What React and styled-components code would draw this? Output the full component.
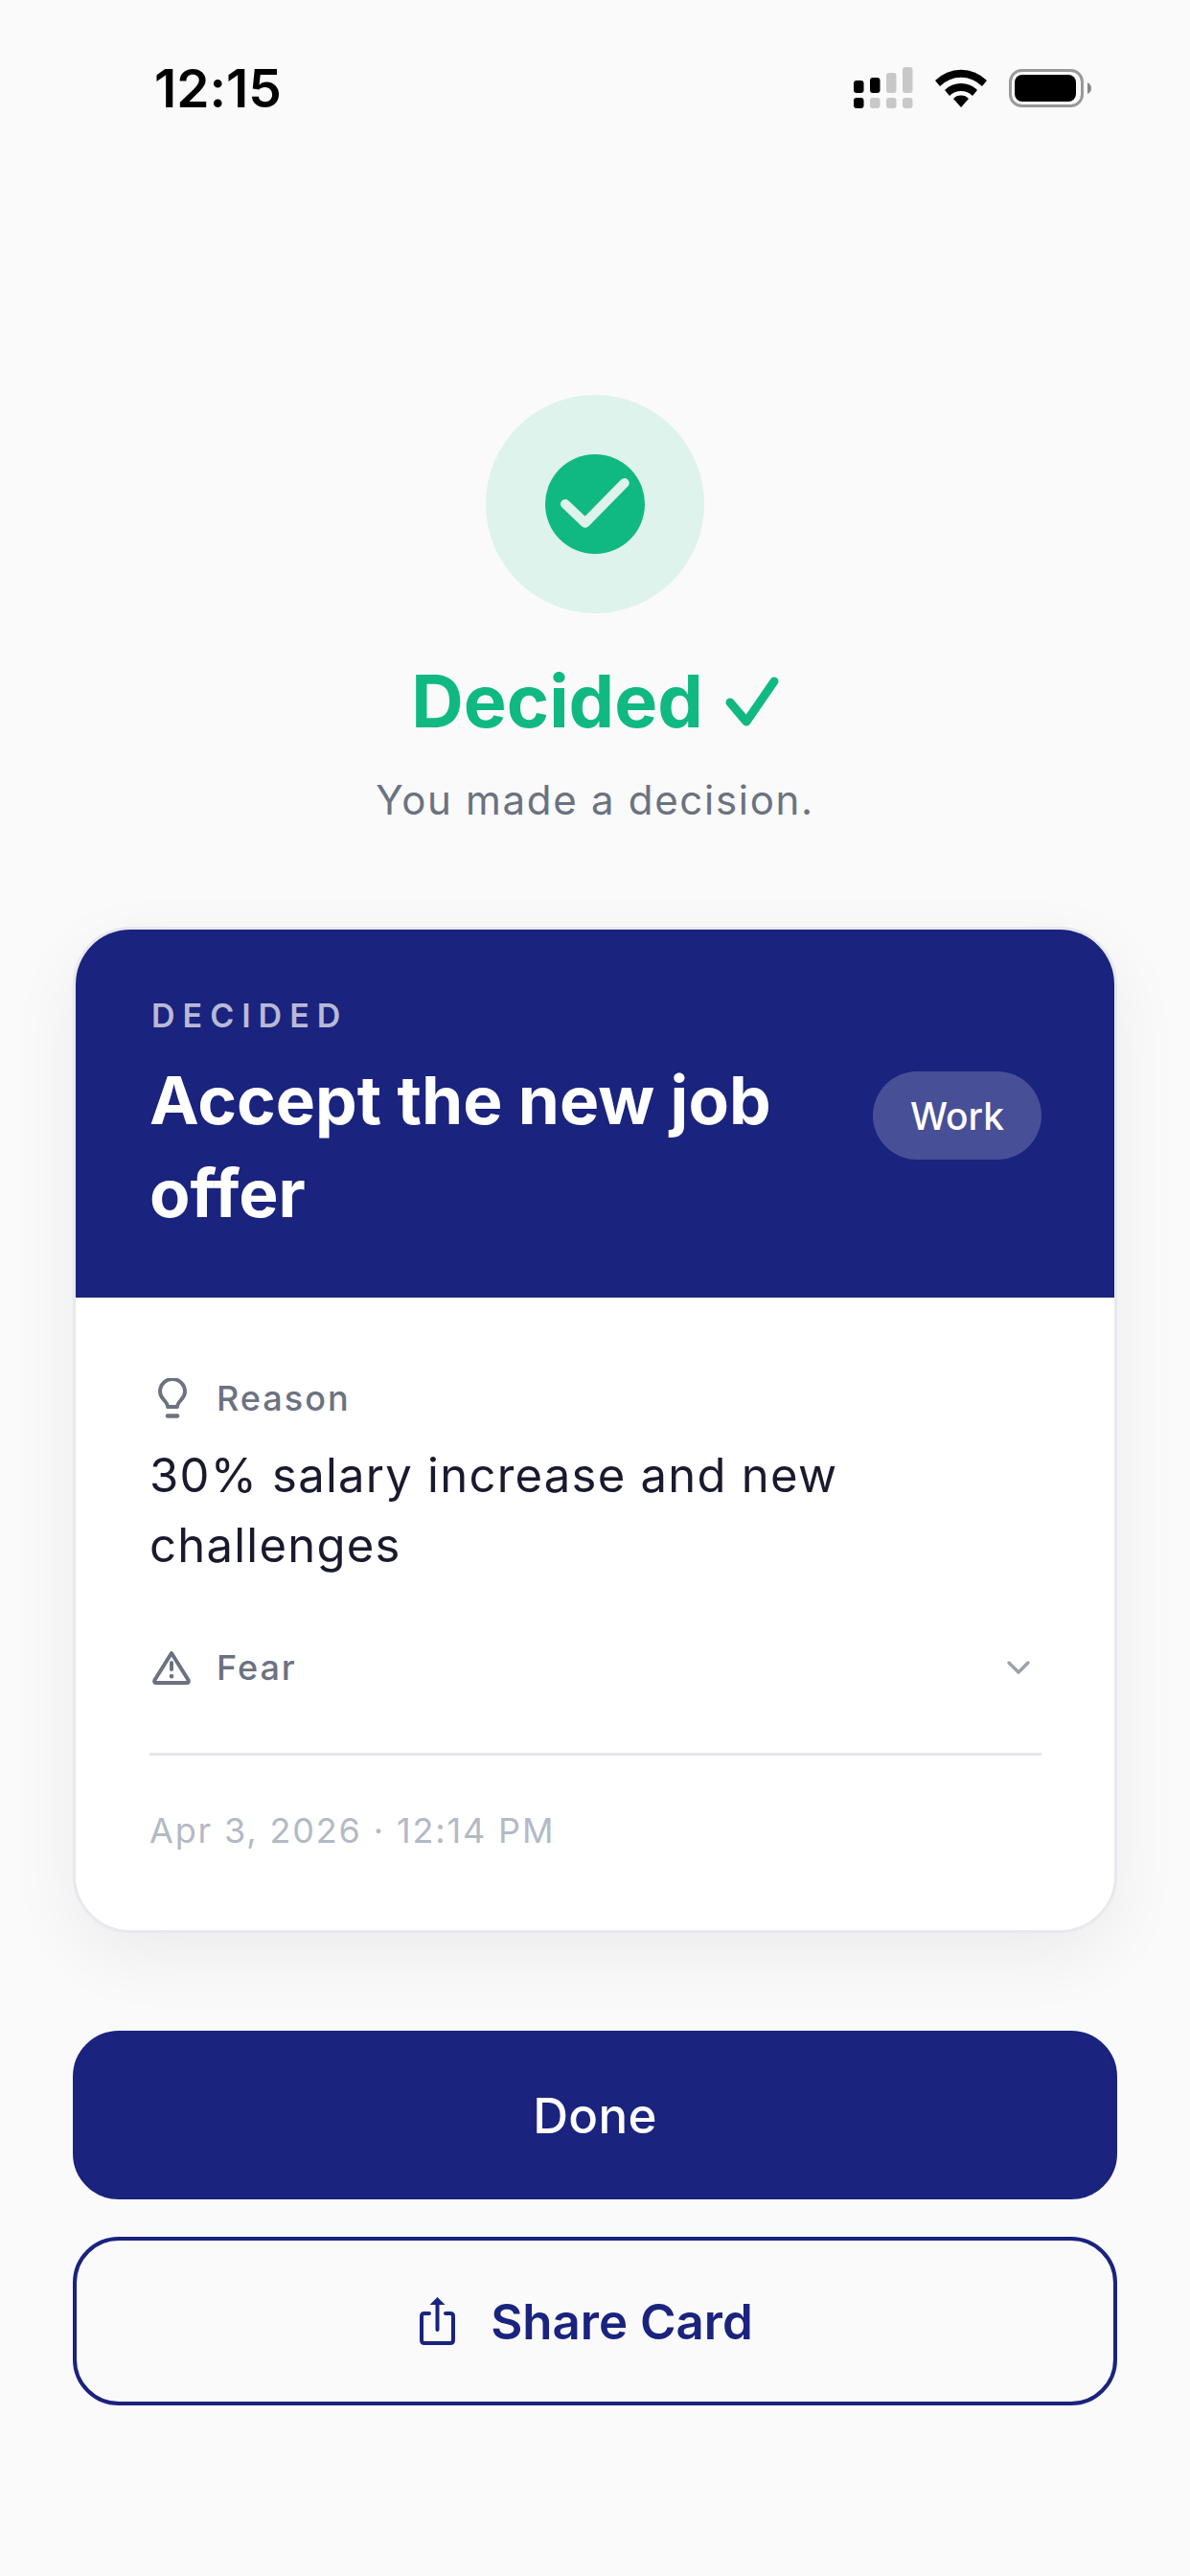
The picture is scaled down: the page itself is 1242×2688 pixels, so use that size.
import React from 'react'
import styled, { createGlobalStyle } from 'styled-components'

const GlobalStyle = createGlobalStyle`
    html, body {
        margin: 0;
        padding: 0;
        background: #fafafb;
    }
    * {
        box-sizing: border-box;
    }
`

const Page = styled.div`
    width: 1242px;
    height: 2688px;
    background: #fafafb;
    font-family: Inter, "Liberation Sans", sans-serif;
    font-variant-ligatures: none;
    display: flex;
    flex-direction: column;
`

const StatusBar = styled.div`
    height: 184px;
    padding: 0 103px 0 161px;
    display: flex;
    align-items: center;
    justify-content: space-between;
`

const Clock = styled.span`
    font-size: 55px;
    font-weight: 600;
    color: #000;
`

const StatusIcons = styled.div`
    display: flex;
    align-items: center;
    gap: 23px;
`

const Hero = styled.div`
    margin-top: 228px;
    display: flex;
    flex-direction: column;
    align-items: center;
`

const Halo = styled.div`
    width: 228px;
    height: 228px;
    border-radius: 50%;
    background: #def3eb;
    display: flex;
    align-items: center;
    justify-content: center;
`

const Badge = styled.div`
    width: 104px;
    height: 104px;
    border-radius: 50%;
    background: #10b981;
    display: flex;
`

const Heading = styled.h1`
    margin: 48px 0 0;
    display: flex;
    align-items: center;
    gap: 23px;
    font-size: 75.5px;
    line-height: 88px;
    font-weight: 700;
    color: #10b981;
`

const Subheading = styled.p`
    margin: 31px 0 0;
    font-size: 42px;
    line-height: 56px;
    letter-spacing: 1.7px;
    color: #6b7280;
`

const Content = styled.div`
    padding: 0 76px;
    display: flex;
    flex-direction: column;
`

const Card = styled.div`
    margin-top: 104px;
    border: 3px solid #e8e9ee;
    border-radius: 60px;
    background: #fff;
    overflow: hidden;
    box-shadow: 0 24px 72px rgba(0, 0, 0, 0.06);
`

const CardHeader = styled.div`
    height: 384px;
    padding: 70px 76px 0 77px;
    background: #1a237e;
    display: flex;
    align-items: flex-start;
    justify-content: space-between;
`

const Eyebrow = styled.div`
    margin-left: 2px;
    font-size: 34px;
    line-height: 40px;
    font-weight: 600;
    letter-spacing: 8px;
    color: rgba(255, 255, 255, 0.7);
`

const CardTitle = styled.h2`
    margin: 20px 0 0;
    width: 680px;
    font-size: 69.3px;
    line-height: 97px;
    font-weight: 700;
    color: #fff;
`

const Tag = styled.span`
    margin-top: 78px;
    width: 176px;
    height: 92px;
    border-radius: 46px;
    background: rgba(255, 255, 255, 0.2);
    display: flex;
    align-items: center;
    justify-content: center;
    font-size: 39px;
    font-weight: 500;
    color: #fff;
`

const CardBody = styled.div`
    padding: 81px 76px 80px 77px;
`

const FieldLabel = styled.div`
    display: flex;
    align-items: center;
    height: 48px;
    font-size: 36px;
    font-weight: 450;
    letter-spacing: 2px;
    color: #6b7280;
`

const LabelIcon = styled.span`
    width: 70px;
    display: flex;
    padding-left: ${props => props.$inset}px;
`

const Chevron = styled.svg`
    margin-left: auto;
    margin-right: 11px;
`

const FieldText = styled.p`
    margin: 20px 0 0;
    font-size: 49px;
    line-height: 73px;
    letter-spacing: 1.25px;
    color: #1a1a2e;
`

const FearRow = styled.div`
    margin-top: 67px;
    padding-bottom: 65px;
    border-bottom: 3px solid #e5e7eb;
`

const Timestamp = styled.div`
    margin-top: 54px;
    font-size: 36px;
    line-height: 48px;
    letter-spacing: 1.85px;
    color: #b4b9c6;
`

const Actions = styled.div`
    margin-top: 102px;
    display: flex;
    flex-direction: column;
    gap: 39px;
`

const ActionButton = styled.button`
    height: 176px;
    padding: 0 ${props => props.$outline ? 18 : 0}px 0 0;
    border-radius: 48px;
    border: 4px solid #1a237e;
    background: ${props => props.$outline ? 'transparent' : '#1a237e'};
    color: ${props => props.$outline ? '#1a237e' : '#fff'};
    font-family: inherit;
    font-size: 51px;
    font-weight: ${props => props.$outline ? 600 : 550};
    letter-spacing: ${props => props.$outline ? 0 : 0.3}px;
    display: flex;
    align-items: center;
    justify-content: center;
    gap: 37px;
`

const SignalIcon = () => {
    const bars = [
        { x: 0, y: 14, h: 13, on: true },
        { x: 17, y: 11, h: 16, on: true },
        { x: 34, y: 6, h: 21, on: false },
        { x: 51, y: 0, h: 27, on: false }
    ]
    return (
        <svg width="62" height="44" viewBox="0 0 62 44">
            {bars.map((b, i) => (
                <g key={i} fill={b.on ? '#000' : '#c8c8c8'}>
                    <rect x={b.x} y={b.y} width="10.5" height={b.h} rx="3" />
                    <rect x={b.x} y="32" width="10.5" height="11" rx="3" fill={i === 0 ? '#000' : '#c8c8c8'} />
                </g>
            ))}
        </svg>
    )
}

const WifiIcon = () => (
    <svg width="54" height="40" viewBox="0 0 54 40">
        <path d="M0 12 A38 38 0 0 1 54 12 L49 18 A31 31 0 0 0 5 18 Z" fill="#000" />
        <path d="M10 22 A24 24 0 0 1 44 22 L39 28 A17 17 0 0 0 15 28 Z" fill="#000" />
        <path d="M19 31 A11 11 0 0 1 35 31 L27 40 Z" fill="#000" />
    </svg>
)

const BatteryIcon = () => (
    <svg width="86" height="40" viewBox="0 0 86 40">
        <rect x="1.5" y="1.5" width="75" height="37" rx="12" fill="none" stroke="#999" strokeWidth="3" />
        <rect x="6" y="6" width="64" height="28" rx="8" fill="#000" />
        <path d="M82 14 Q86 16 86 20 Q86 24 82 26 Z" fill="#888" />
    </svg>
)

const BulbIcon = () => (
    <svg width="30" height="42" viewBox="0 0 30 42" fill="none" stroke="#6b7280" strokeLinejoin="round">
        <path d="M10 30 C10 24 2 22 2 14 A13 13 0 0 1 28 14 C28 22 20 24 20 30 Z" strokeWidth="4" />
        <path d="M10 39.5 H20" strokeWidth="4.5" strokeLinecap="round" />
    </svg>
)

const WarningIcon = () => (
    <svg width="40" height="36" viewBox="0 0 40 36" fill="none" stroke="#6b7280" strokeLinecap="round" strokeLinejoin="round">
        <path d="M20 3 L37.5 31 Q38.5 34 36 34 H4 Q1.5 34 2.5 31 Z" strokeWidth="4" />
        <path d="M20 13 V20" strokeWidth="4" />
        <path d="M20 27 V27.2" strokeWidth="4.5" />
    </svg>
)

const ShareIcon = () => (
    <svg width="37" height="50" viewBox="0 0 37 50" fill="none" stroke="#1a237e" strokeWidth="4" strokeLinecap="round">
        <path d="M10 17 H5 Q2 17 2 20 V45 Q2 48 5 48 H32 Q35 48 35 45 V20 Q35 17 32 17 H27" />
        <path d="M18.5 6 V34" />
        <path d="M10.5 8 L18.5 0 L26.5 8 Z" fill="#1a237e" stroke="none" />
    </svg>
)

const App = () => {
    return (
        <Page>
            <GlobalStyle />
            <StatusBar>
                <Clock>12:15</Clock>
                <StatusIcons>
                    <SignalIcon />
                    <WifiIcon />
                    <BatteryIcon />
                </StatusIcons>
            </StatusBar>
            <Hero>
                <Halo>
                    <Badge>
                        <svg width="104" height="104" viewBox="0 0 104 104" fill="none">
                            <path d="M21 52 L41.7 71.7 L82.7 30" stroke="#def3eb" strokeWidth="10" strokeLinecap="round" strokeLinejoin="round" />
                        </svg>
                    </Badge>
                </Halo>
                <Heading>
                    Decided
                    <svg width="56" height="54" viewBox="0 0 56 54" fill="none">
                        <path d="M5 28 L22 48 L51 6" stroke="#10b981" strokeWidth="9" strokeLinecap="round" strokeLinejoin="round" />
                    </svg>
                </Heading>
                <Subheading>You made a decision.</Subheading>
            </Hero>
            <Content>
                <Card>
                    <CardHeader>
                        <div>
                            <Eyebrow>DECIDED</Eyebrow>
                            <CardTitle>Accept the new job offer</CardTitle>
                        </div>
                        <Tag>Work</Tag>
                    </CardHeader>
                    <CardBody>
                        <FieldLabel>
                            <LabelIcon $inset={9}><BulbIcon /></LabelIcon>
                            Reason
                        </FieldLabel>
                        <FieldText>30% salary increase and new challenges</FieldText>
                        <FearRow>
                            <FieldLabel>
                                <LabelIcon $inset={3}><WarningIcon /></LabelIcon>
                                Fear
                                <Chevron width="26" height="16" viewBox="0 0 26 16" fill="none">
                                    <path d="M3 3 L13 13 L23 3" stroke="#9ca3af" strokeWidth="3.5" strokeLinecap="round" strokeLinejoin="round" />
                                </Chevron>
                            </FieldLabel>
                        </FearRow>
                        <Timestamp>Apr 3, 2026 · 12:14 PM</Timestamp>
                    </CardBody>
                </Card>
                <Actions>
                    <ActionButton>Done</ActionButton>
                    <ActionButton $outline>
                        <ShareIcon />
                        Share Card
                    </ActionButton>
                </Actions>
            </Content>
        </Page>
    )
}

export default App
